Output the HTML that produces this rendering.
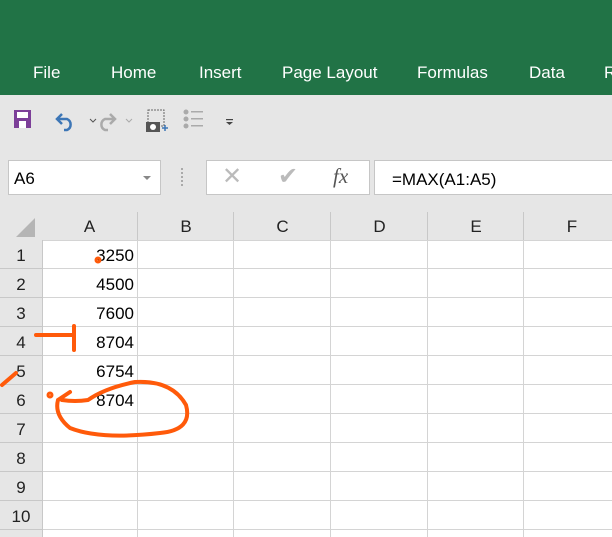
<html><head><style>
body{margin:0;width:612px;height:537px;overflow:hidden;background:#fff;font-family:"Liberation Sans",sans-serif;position:relative}
.a{position:absolute}
.tab{position:absolute;top:63px;color:#fff;font-size:17px}
.ch{position:absolute;top:212px;height:28px;font-size:17px;text-align:center;line-height:30px;color:#222}
</style></head><body>
<div class="a" style="left:0;top:0;width:612px;height:95px;background:#217346"></div>
<div class="tab" style="left:33px">File</div>
<div class="tab" style="left:111px">Home</div>
<div class="tab" style="left:199px">Insert</div>
<div class="tab" style="left:282px">Page Layout</div>
<div class="tab" style="left:417px">Formulas</div>
<div class="tab" style="left:529px">Data</div>
<div class="tab" style="left:604px">R</div>
<div class="a" style="left:0;top:95px;width:612px;height:145px;background:#e6e6e6"></div>
<svg class="a" style="left:0;top:95px" width="300" height="50">
<rect x="14" y="15" width="17" height="18" fill="#7c3f98"/><rect x="17" y="17" width="11" height="6" fill="#fff"/><rect x="19" y="26" width="7" height="7" fill="#fff"/>
<path d="M62 19 l-5 5 5 5 M57 24 h10 a6 6 0 0 1 0 11 h-3" stroke="#3d76b6" stroke-width="2.5" fill="none"/>
<path d="M90 24 l3 3 3 -3" stroke="#555" fill="none"/>
<path d="M110 19 l5 5 -5 5 M115 24 h-10 a6 6 0 0 0 0 11 h3" stroke="#aaa" stroke-width="2.5" fill="none"/>
<path d="M126 24 l3 3 3 -3" stroke="#aaa" fill="none"/>
<rect x="148" y="15" width="16" height="16" fill="none" stroke="#666" stroke-dasharray="2 1"/>
<rect x="146" y="27" width="14" height="10" fill="#555"/><circle cx="153" cy="32" r="3" fill="#fff"/>
<path d="M162 33h6M165 30v6" stroke="#3d76b6" stroke-width="1.5"/>
<g fill="#aaa"><circle cx="186" cy="17" r="2.5"/><circle cx="186" cy="24" r="2.5"/><circle cx="186" cy="31" r="2.5"/><rect x="191" y="16" width="12" height="1.5"/><rect x="191" y="23" width="12" height="1.5"/><rect x="191" y="30" width="12" height="1.5"/></g>
<rect x="226" y="24" width="7" height="1.2" fill="#444"/><path d="M226 27h7l-3.5 3z" fill="#444"/>
</svg>
<div class="a" style="left:8px;top:160px;width:146px;height:33px;background:#fff;border:1px solid #c6c6c6;font-size:17px;line-height:35px;padding-left:5px">A6</div>
<div class="a" style="left:143px;top:176px;border:4px solid transparent;border-top-color:#888"></div>
<div class="a" style="left:181px;top:168px;width:2px;height:18px;border-left:2px dotted #aaa"></div>
<div class="a" style="left:206px;top:160px;width:162px;height:33px;background:#fff;border:1px solid #c6c6c6"></div>
<div class="a" style="left:222px;top:162px;font-size:24px;color:#bbb">✕</div>
<div class="a" style="left:278px;top:162px;font-size:24px;color:#bbb">✔</div>
<div class="a" style="left:333px;top:164px;font-size:21px;font-style:italic;font-family:'Liberation Serif',serif;color:#555">fx</div>
<div class="a" style="left:374px;top:160px;width:240px;height:33px;background:#fff;border:1px solid #c6c6c6;font-size:17px;line-height:37px;padding-left:17px">=MAX(A1:A5)</div>
<svg class="a" style="left:0;top:212px" width="42" height="28"><path d="M16 25 L35 6 V25Z" fill="#b5b5b5"/></svg>
<div class="ch" style="left:42px;width:95px">A</div>
<div class="ch" style="left:137px;width:96px;border-left:1px solid #c8c8c8">B</div>
<div class="ch" style="left:233px;width:97px;border-left:1px solid #c8c8c8">C</div>
<div class="ch" style="left:330px;width:97px;border-left:1px solid #c8c8c8">D</div>
<div class="ch" style="left:427px;width:96px;border-left:1px solid #c8c8c8">E</div>
<div class="ch" style="left:523px;width:96px;border-left:1px solid #c8c8c8">F</div>
<svg class="a" style="left:0;top:240px" width="612" height="297">
<g stroke="#d4d4d4"><path d="M137.5 0V297M233.5 0V297M330.5 0V297M427.5 0V297M523.5 0V297"/>
<path d="M0 0.5H612M0 28.5H612M0 57.5H612M0 86.5H612M0 115.5H612M0 144.5H612M0 173.5H612M0 202.5H612M0 231.5H612M0 260.5H612M0 289.5H612"/></g>
<rect x="0" y="0" width="42" height="297" fill="#e6e6e6"/>
<g stroke="#c8c8c8"><path d="M0 28.5H42M0 57.5H42M0 86.5H42M0 115.5H42M0 144.5H42M0 173.5H42M0 202.5H42M0 231.5H42M0 260.5H42M0 289.5H42M42.5 0V297"/></g>
<g font-size="17" fill="#222" font-family="Liberation Sans" text-anchor="middle">
<text x="21" y="21">1</text><text x="21" y="50">2</text><text x="21" y="79">3</text><text x="21" y="108">4</text><text x="21" y="137">5</text><text x="21" y="166">6</text><text x="21" y="195">7</text><text x="21" y="224">8</text><text x="21" y="253">9</text><text x="21" y="282">10</text></g>
<g font-size="17" fill="#000" font-family="Liberation Sans" text-anchor="end">
<text x="134" y="21">3250</text><text x="134" y="50">4500</text><text x="134" y="79">7600</text><text x="134" y="108">8704</text><text x="134" y="137">6754</text><text x="134" y="166">8704</text></g>
<g stroke="#ff5a0a" stroke-width="4" fill="none" stroke-linecap="round">
<circle cx="98" cy="20" r="1.5"/>
<path d="M36 95 H72 M74 86 V110"/>
<path d="M2 145 L16 133"/>
<circle cx="50" cy="155" r="1.5"/>
<path d="M70 152 L58 160 Q54 175 70 188 Q100 200 160 193 Q193 190 186 165 Q172 140 135 142 Q105 148 88 160 Q75 162 62 160"/>
</g>
</svg>
</body></html>
